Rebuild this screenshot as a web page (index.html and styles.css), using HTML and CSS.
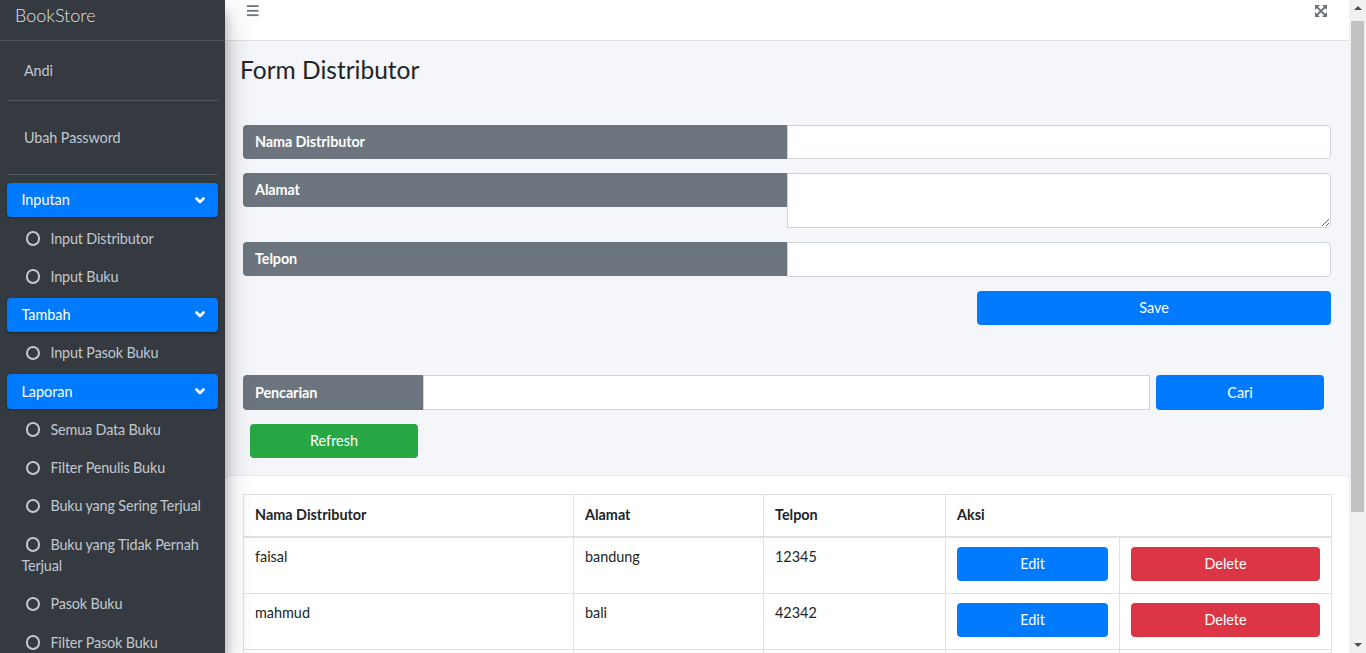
FILE: index.html
```html
<!DOCTYPE html>
<html lang="id">
<head>
<meta charset="utf-8">
<title>BookStore | Form Distributor</title>
<link rel="stylesheet" href="styles.css">
</head>
<body>
<div class="app">
  <aside class="sidebar">
    <div class="brand">BookStore</div>
    <div class="user-panel user-panel-a"><span>Andi</span></div>
    <div class="user-panel user-panel-b"><span>Ubah Password</span></div>
    <nav class="nav">
      <div class="nav-head">Inputan<svg class="chev" viewBox="0 0 10 7"><polyline points="1.5,1.5 5,5 8.5,1.5"/></svg></div>
      <div class="nav-item"><span class="circle"></span>Input Distributor</div>
      <div class="nav-item"><span class="circle"></span>Input Buku</div>
      <div class="nav-head">Tambah<svg class="chev" viewBox="0 0 10 7"><polyline points="1.5,1.5 5,5 8.5,1.5"/></svg></div>
      <div class="nav-item"><span class="circle"></span>Input Pasok Buku</div>
      <div class="nav-head">Laporan<svg class="chev" viewBox="0 0 10 7"><polyline points="1.5,1.5 5,5 8.5,1.5"/></svg></div>
      <div class="nav-item"><span class="circle"></span>Semua Data Buku</div>
      <div class="nav-item"><span class="circle"></span>Filter Penulis Buku</div>
      <div class="nav-item"><span class="circle"></span>Buku yang Sering Terjual</div>
      <div class="nav-item wrap"><span class="circle"></span>Buku yang Tidak Pernah<br>Terjual</div>
      <div class="nav-item"><span class="circle"></span>Pasok Buku</div>
      <div class="nav-item"><span class="circle"></span>Filter Pasok Buku</div>
    </nav>
  </aside>

  <main class="main">
    <header class="topbar">
      <svg class="ico-bars" viewBox="0 0 12 12"><rect x="0" y="0.2" width="11.5" height="1.8"/><rect x="0" y="4.9" width="11.5" height="1.8"/><rect x="0" y="9.3" width="11.5" height="1.8"/></svg>
      <svg class="ico-expand" viewBox="0 0 12 12">
        <path class="x" d="M2 2 L10 10 M10 2 L2 10"/>
        <polygon points="0,0 5,0 0,5"/>
        <polygon points="12,0 7,0 12,5"/>
        <polygon points="0,12 5,12 0,7"/>
        <polygon points="12,12 7,12 12,7"/>
      </svg>
    </header>

    <section class="content-header">
      <h1>Form Distributor</h1>
    </section>

    <section class="form">
      <div class="frow">
        <div class="flabel">Nama Distributor</div>
        <input class="finput" type="text">
      </div>
      <div class="frow">
        <div class="flabel">Alamat</div>
        <textarea class="finput ftext"></textarea>
      </div>
      <div class="frow">
        <div class="flabel">Telpon</div>
        <input class="finput finput-tel" type="text">
      </div>
      <div class="save-row">
        <button class="btn btn-primary btn-save">Save</button>
      </div>

      <div class="search-row">
        <div class="flabel slabel">Pencarian</div>
        <input class="finput sinput" type="text">
        <button class="btn btn-primary btn-cari">Cari</button>
      </div>
      <button class="btn btn-success btn-refresh">Refresh</button>
    </section>

    <section class="card">
      <table class="table">
        <colgroup>
          <col class="c1"><col class="c2"><col class="c3"><col class="c4"><col class="c5">
        </colgroup>
        <thead>
          <tr><th>Nama Distributor</th><th>Alamat</th><th>Telpon</th><th colspan="2">Aksi</th></tr>
        </thead>
        <tbody>
          <tr><td>faisal</td><td>bandung</td><td>12345</td><td><button class="btn btn-primary btn-block">Edit</button></td><td><button class="btn btn-danger btn-block">Delete</button></td></tr>
          <tr><td>mahmud</td><td>bali</td><td>42342</td><td><button class="btn btn-primary btn-block">Edit</button></td><td><button class="btn btn-danger btn-block">Delete</button></td></tr>
          <tr class="row-hidden"><td></td><td></td><td></td><td></td><td></td></tr>
        </tbody>
      </table>
    </section>
  </main>

  <div class="scrollbar" aria-hidden="true">
    <div class="sb-btn sb-up"></div>
    <div class="sb-track"><div class="sb-thumb"></div></div>
    <div class="sb-btn sb-down"></div>
  </div>
</div>
</body>
</html>
```
FILE: styles.css
```css
* { box-sizing: border-box; }
html, body { margin: 0; padding: 0; height: 100%; }
body {
  font-family: "Source Sans Pro", Lato, "Noto Sans", sans-serif;
  font-size: 14.4px;
  line-height: 1.5;
  color: #212529;
  overflow: hidden;
}
.app { display: flex; height: 100vh; }

/* Sidebar */
.sidebar {
  position: relative;
  z-index: 10;
  width: 225px;
  flex: 0 0 225px;
  height: 100vh;
  overflow: hidden;
  background: #343a40;
  color: #c2c7d0;
  box-shadow: 0 14px 28px rgba(0,0,0,.25), 0 10px 10px rgba(0,0,0,.22);
}
.brand {
  height: 41px;
  padding: 2px 15px 0;
  font-size: 18px;
  font-weight: 300;
  line-height: 27px;
  color: rgba(255,255,255,.88);
  border-bottom: 1px solid #4b545c;
}
.user-panel {
  margin: 0 7px;
  padding-left: 17px;
  display: flex;
  align-items: center;
  border-bottom: 1px solid #4f5962;
  letter-spacing: -0.1px;
}
.user-panel-a { height: 60px; }
.user-panel-b { height: 74px; }
.nav { padding: 8px 7px 0; }
.nav-head {
  display: flex;
  align-items: center;
  justify-content: space-between;
  height: 34.4px;
  padding: 0 13px 0 14.4px;
  margin-bottom: 3.9px;
  background: #007bff;
  color: #fff;
  border-radius: 4px;
  box-shadow: 0 1px 3px rgba(0,0,0,.12), 0 1px 2px rgba(0,0,0,.24);
}
.chev { width: 10px; height: 7px; }
.chev polyline { fill: none; stroke: #fff; stroke-width: 2.6; stroke-linecap: round; stroke-linejoin: round; }
.nav-item {
  padding: 6.4px 14.4px;
  margin-bottom: 3.85px;
  white-space: nowrap;
  color: #c2c7d0;
  letter-spacing: -0.15px;
}
.circle {
  display: inline-block;
  vertical-align: -2px;
  width: 14.5px;
  height: 14.5px;
  margin: 0 10px 0 4.5px;
  border: 2px solid #c2c7d0;
  border-radius: 50%;
}

/* Main */
.main {
  flex: 1;
  height: 100vh;
  overflow: hidden;
  background: #f4f6f9;
}

/* Scrollbar drawn as a column */
.scrollbar {
  flex: 0 0 17px;
  height: 100vh;
  background: #f1f1f1;
  display: flex;
  flex-direction: column;
}
.sb-btn { height: 17px; flex: 0 0 17px; position: relative; }
.sb-up::after, .sb-down::after {
  content: "";
  position: absolute;
  left: 4.5px;
  width: 0; height: 0;
  border-left: 4px solid transparent;
  border-right: 4px solid transparent;
}
.sb-up::after { top: 6px; border-bottom: 4px solid #505050; }
.sb-down::after { top: 7px; border-top: 4px solid #505050; }
.sb-track { flex: 1; padding: 4px 2px 0; }
.sb-thumb { height: 491px; background: #c1c1c1; }

.topbar {
  height: 41px;
  background: #fff;
  border-bottom: 1px solid #dee2e6;
  display: flex;
  justify-content: space-between;
  align-items: flex-start;
  padding: 5px 22px 0;
}
.ico-bars { width: 12px; height: 12px; fill: #6c757d; }
.ico-expand { width: 12px; height: 12px; fill: #6c757d; }
.ico-expand .x { stroke: #6c757d; stroke-width: 1.8; fill: none; }

.content-header { padding: 14px 15px 0; }
.content-header h1 {
  margin: 0;
  font-size: 24.5px;
  font-weight: 400;
  line-height: 30px;
  color: #212529;
}

.form { padding: 40px 18px 0; }
.frow {
  display: grid;
  grid-template-columns: 1fr 1fr;
  align-items: start;
  margin-bottom: 14px;
}
.flabel {
  height: 34px;
  display: flex;
  align-items: center;
  padding: 0 12px;
  background: #6c757d;
  color: #fff;
  font-weight: 700;
  border-radius: 4px 0 0 4px;
  letter-spacing: -0.1px;
}
.finput {
  display: block;
  width: 100%;
  height: 34px;
  margin: 0;
  border: 1px solid #ced4da;
  border-radius: 0 4px 4px 0;
  background: #fff;
  font: inherit;
  outline: none;
}
.finput-tel { height: 35px; }
.ftext { height: 55px; resize: vertical; }
.save-row { display: flex; justify-content: flex-end; }
.btn {
  height: 34px;
  border: 0;
  border-radius: 4px;
  color: #fff;
  font: inherit;
  padding: 0 12px;
  cursor: pointer;
}
.btn-primary { background: #007bff; }
.btn-success { background: #28a745; }
.btn-danger { background: #dc3545; }
.btn-save { width: 354px; }
.search-row {
  display: flex;
  align-items: stretch;
  margin-top: 50px;
  padding-right: 7px;
}
.slabel { flex: 0 0 180px; height: 35px; }
.sinput { flex: 1; width: auto; height: 35px; border-radius: 0; }
.btn-cari { flex: 0 0 168px; height: 35px; margin-left: 6px; }
.btn-refresh { display: block; width: 168px; margin: 14px 0 0 7px; }

.card {
  margin-top: 18px;
  background: #fff;
  border-radius: 4px 4px 0 0;
  box-shadow: 0 0 1px rgba(0,0,0,.2), 0 1px 3px rgba(0,0,0,.15);
  padding: 18px 18px 18px;
}
.table {
  width: 100%;
  table-layout: fixed;
  border-collapse: collapse;
  border: 1px solid #dee2e6;
}
.c1 { width: 330px; }
.c2 { width: 190px; }
.c3 { width: 182px; }
.c4 { width: 174px; }
.c5 { width: 212px; }
.table th, .table td {
  border: 1px solid #dee2e6;
  padding: 9px 11px 10px;
  text-align: left;
  vertical-align: top;
}
.table td { padding-top: 8.5px; padding-bottom: 11.5px; }
.table th { font-weight: 700; border-bottom-width: 2px; }
.row-hidden td { height: 56px; }
.btn-block { display: block; width: 100%; margin-top: 1px; }
```
